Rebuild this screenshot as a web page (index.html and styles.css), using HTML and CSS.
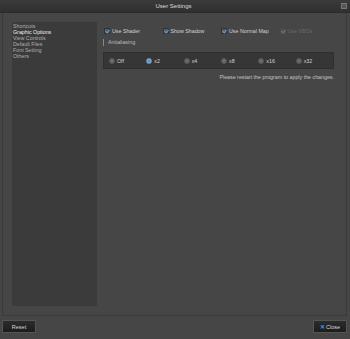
FILE: index.html
```html
<!DOCTYPE html>
<html lang="en">
<head>
    <meta charset="UTF-8">
    <title>User Settings</title>
    <link rel="stylesheet" href="styles.css">
</head>
<body>
    <div class="window">
        <div class="titlebar">
            <span></span>
            <span class="title">User Settings</span>
            <span class="close-box"></span>
        </div>

        <div class="main">
            <ul class="nav">
                <li>Shortcuts</li>
                <li class="active">Graphic Options</li>
                <li>View Controls</li>
                <li>Default Files</li>
                <li>Font Setting</li>
                <li>Others</li>
            </ul>

            <div class="content">
                <div class="checks">
                    <label class="check"><span class="box on"></span>Use Shader</label>
                    <label class="check"><span class="box on"></span>Show Shadow</label>
                    <label class="check"><span class="box on"></span>Use Normal Map</label>
                    <label class="check disabled"><span class="box on"></span>Use VBOs</label>
                </div>

                <div class="section">Antialiasing</div>

                <div class="radios">
                    <label class="radio"><span class="dot"></span>Off</label>
                    <label class="radio"><span class="dot on"></span>x2</label>
                    <label class="radio"><span class="dot"></span>x4</label>
                    <label class="radio"><span class="dot"></span>x8</label>
                    <label class="radio"><span class="dot"></span>x16</label>
                    <label class="radio"><span class="dot"></span>x32</label>
                </div>

                <p class="note">Please restart the program to apply the changes.</p>
            </div>
        </div>

        <div class="footer">
            <button class="btn">Reset</button>
            <button class="btn"><span class="x">&#x2715;</span>Close</button>
        </div>
    </div>
</body>
</html>
```

FILE: styles.css
```css
* {
    margin: 0;
    padding: 0;
    box-sizing: border-box;
}

body {
    background-color: #464646;
    font-family: 'Liberation Sans', Arial, sans-serif;
    font-size: 5.3px;
    color: #c8c8c8;
    width: 350px;
    height: 339px;
    overflow: hidden;
}

.window {
    display: flex;
    flex-direction: column;
    height: 339px;
}

.titlebar {
    height: 13px;
    display: grid;
    grid-template-columns: 1fr auto 1fr;
    align-items: center;
    background: linear-gradient(#3a3a3a, #303030);
    border-bottom: 1px solid #2a2a2a;
    padding-right: 3px;
}

.title {
    font-size: 6px;
    color: #dcdcdc;
}

.close-box {
    justify-self: end;
    width: 6px;
    height: 6px;
    border: 1px solid #777;
    background-color: #555;
}

.main {
    display: flex;
    height: 303px;
    margin: 0 3px 0 2px;
    padding: 9px 12px 9px 9px;
    border: 1px solid #3a3a3a;
    border-top: none;
}

.nav {
    list-style: none;
    flex-shrink: 0;
    width: 85px;
    background-color: #3b3b3b;
    padding: 1px 1px;
}

.nav li {
    height: 6px;
    line-height: 6px;
    color: #b0b0b0;
}

.nav li.active {
    color: #f0f0f0;
}

.content {
    flex: 1;
    margin-left: 6px;
    padding-top: 5px;
}

.checks {
    display: flex;
    padding-left: 1px;
}

.check {
    display: flex;
    align-items: center;
    width: 58.5px;
    height: 8px;
    color: #d2d2d2;
}

.check.disabled {
    width: auto;
    color: #6a6a6a;
}

.box {
    width: 6px;
    height: 6px;
    margin-right: 2px;
    background-color: #5a5a5a;
    border: 1px solid #333;
    position: relative;
}

.box.on::after {
    content: "";
    position: absolute;
    left: 1px;
    top: 0;
    width: 2px;
    height: 3px;
    border: solid #4aa3ff;
    border-width: 0 1px 1px 0;
    transform: rotate(40deg);
}

.check.disabled .box {
    background-color: #505050;
    border-color: #4a4a4a;
}

.check.disabled .box.on::after {
    border-color: #777;
}

.section {
    margin-top: 4px;
    height: 7px;
    line-height: 7px;
    padding-left: 4px;
    border-left: 1px solid #888;
    color: #bcbcbc;
}

.radios {
    display: flex;
    margin-top: 6px;
    width: 231px;
    height: 17px;
    align-items: center;
    padding-left: 5px;
    background-color: #363636;
    border: 1px solid #2f2f2f;
}

.radio {
    display: flex;
    align-items: center;
    width: 37.6px;
    color: #d2d2d2;
}

.dot {
    width: 6px;
    height: 6px;
    border-radius: 50%;
    margin-right: 2px;
    background-color: #6a6a6a;
    border: 1px solid #555;
}

.dot.on {
    background: radial-gradient(circle, #3a9cff 0 1.5px, #dcdcdc 2px);
    border-color: #8a8a8a;
}

.note {
    width: 231px;
    text-align: right;
    margin-top: 5px;
    color: #c4c4c4;
}

.footer {
    flex: 1;
    display: flex;
    justify-content: space-between;
    align-items: flex-start;
    padding: 4px 3px 0 2px;
}

.btn {
    display: flex;
    align-items: center;
    justify-content: center;
    width: 34px;
    height: 13px;
    font-family: 'Liberation Sans', Arial, sans-serif;
    font-size: 5.5px;
    color: #d8d8d8;
    background: linear-gradient(#2c2c2c, #1c1c1c);
    border: 1px solid #555;
    border-radius: 1px;
}

.x {
    color: #3a9cff;
    font-weight: bold;
    margin-right: 1px;
}
```
